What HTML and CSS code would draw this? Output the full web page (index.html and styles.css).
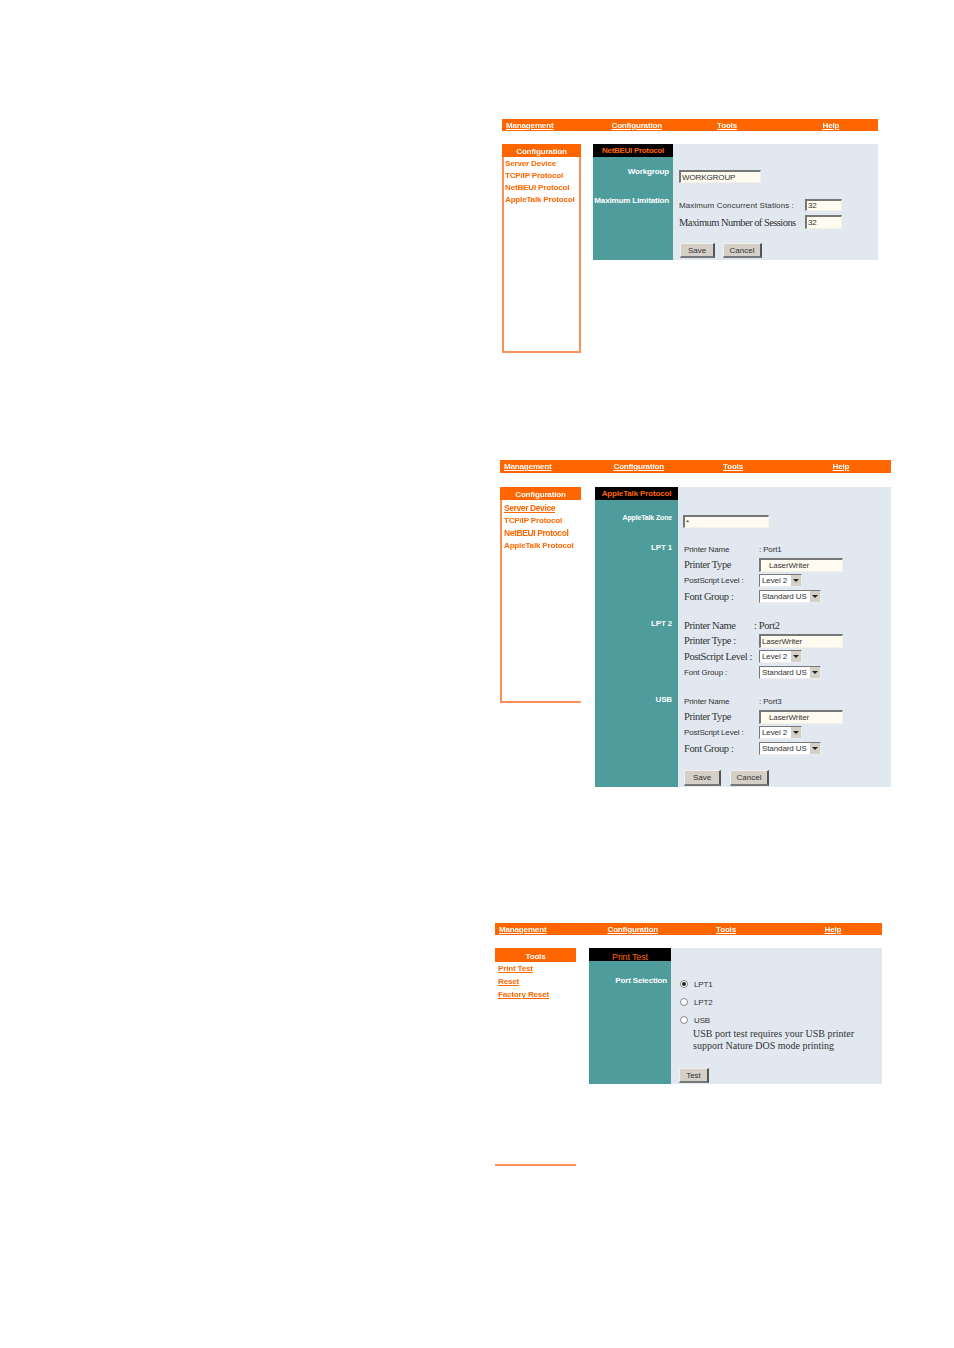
FILE: index.html
```html
<!DOCTYPE html>
<html lang="en">
<head>
  <meta charset="UTF-8">
  <title>Print Server Manual Page</title>
  <link rel="stylesheet" href="styles.css">
</head>
<body>
  <!-- NetBEUI screen -->
  <section class="shot shot-a">
    <nav class="topbar">
      <a>Management</a><a>Configuration</a><a>Tools</a><a>Help</a>
    </nav>
    <div class="shot-body">
      <aside class="side">
        <div class="side-title">Configuration</div>
        <a class="side-link">Server Device</a>
        <a class="side-link">TCP/IP Protocol</a>
        <a class="side-link">NetBEUI Protocol</a>
        <a class="side-link">AppleTalk Protocol</a>
      </aside>
      <div class="panel">
        <div class="panel-title">NetBEUI Protocol</div>
        <div class="panel-fill"></div>
        <div class="row a-workgroup">
          <div class="row-label">Workgroup</div>
          <div class="row-body"><input class="field field-name" value="WORKGROUP" readonly></div>
        </div>
        <div class="row a-limit">
          <div class="row-label">Maximum Limitation</div>
          <div class="row-body">
            <div class="limit-line small-line"><span class="limit-text">Maximum Concurrent Stations :</span><input class="field field-num" value="32" readonly></div>
            <div class="limit-line big-line"><span class="limit-text">Maximum Number of Sessions</span><input class="field field-num tall" value="32" readonly></div>
          </div>
        </div>
        <div class="row a-buttons">
          <div class="row-label"></div>
          <div class="row-body buttons"><button class="btn btn-save">Save</button><button class="btn btn-cancel">Cancel</button></div>
        </div>
      </div>
    </div>
  </section>

  <!-- AppleTalk screen -->
  <section class="shot shot-b">
    <nav class="topbar">
      <a>Management</a><a>Configuration</a><a>Tools</a><a>Help</a>
    </nav>
    <div class="shot-body">
      <aside class="side side-open">
        <div class="side-title">Configuration</div>
        <a class="side-link underlined big-link">Server Device</a>
        <a class="side-link">TCP/IP Protocol</a>
        <a class="side-link big-link">NetBEUI Protocol</a>
        <a class="side-link">AppleTalk Protocol</a>
      </aside>
      <div class="panel">
        <div class="panel-title">AppleTalk Protocol</div>
        <div class="panel-fill"></div>
        <div class="row b-zone">
          <div class="row-label label-small">AppleTalk Zone</div>
          <div class="row-body"><input class="field field-zone" value="*" readonly></div>
        </div>
        <div class="row b-port">
          <div class="row-label">LPT 1</div>
          <div class="row-body port">
            <div class="port-line line-name small-line"><span class="port-key">Printer Name</span><span class="port-value">: Port1</span></div>
            <div class="port-line line-input big-line"><span class="port-key">Printer Type</span><input class="field field-type field-inset" value="LaserWriter" readonly></div>
            <div class="port-line line-select small-line"><span class="port-key">PostScript Level :</span><div class="select select-level">Level 2<i class="arrow"></i></div></div>
            <div class="port-line line-select big-line"><span class="port-key">Font Group :</span><div class="select select-font">Standard US<i class="arrow"></i></div></div>
          </div>
        </div>
        <div class="row b-port">
          <div class="row-label">LPT 2</div>
          <div class="row-body port">
            <div class="port-line line-name big-line"><span class="port-key">Printer Name</span><span class="port-value">: Port2</span></div>
            <div class="port-line line-input big-line"><span class="port-key">Printer Type :</span><input class="field field-type" value="LaserWriter" readonly></div>
            <div class="port-line line-select big-line"><span class="port-key">PostScript Level :</span><div class="select select-level">Level 2<i class="arrow"></i></div></div>
            <div class="port-line line-select small-line"><span class="port-key">Font Group :</span><div class="select select-font">Standard US<i class="arrow"></i></div></div>
          </div>
        </div>
        <div class="row b-port">
          <div class="row-label">USB</div>
          <div class="row-body port">
            <div class="port-line line-name small-line"><span class="port-key">Printer Name</span><span class="port-value">: Port3</span></div>
            <div class="port-line line-input big-line"><span class="port-key">Printer Type</span><input class="field field-type field-inset" value="LaserWriter" readonly></div>
            <div class="port-line line-select small-line"><span class="port-key">PostScript Level :</span><div class="select select-level">Level 2<i class="arrow"></i></div></div>
            <div class="port-line line-select big-line"><span class="port-key">Font Group :</span><div class="select select-font">Standard US<i class="arrow"></i></div></div>
          </div>
        </div>
        <div class="row b-buttons">
          <div class="row-label"></div>
          <div class="row-body buttons"><button class="btn btn-save">Save</button><button class="btn btn-cancel">Cancel</button></div>
        </div>
      </div>
    </div>
  </section>

  <!-- Print test screen -->
  <section class="shot shot-c">
    <nav class="topbar">
      <a>Management</a><a>Configuration</a><a>Tools</a><a>Help</a>
    </nav>
    <div class="shot-body">
      <aside class="side side-bare">
        <div class="side-title">Tools</div>
        <a class="side-link underlined">Print Test</a>
        <a class="side-link underlined">Reset</a>
        <a class="side-link underlined">Factory Reset</a>
      </aside>
      <div class="panel">
        <div class="panel-title">Print Test</div>
        <div class="panel-fill"></div>
        <div class="row c-ports">
          <div class="row-label">Port Selection</div>
          <div class="row-body">
            <label class="radio-line"><i class="radio on"></i>LPT1</label>
            <label class="radio-line"><i class="radio"></i>LPT2</label>
            <label class="radio-line"><i class="radio"></i>USB</label>
            <p class="note">USB port test requires your USB printer<br>support Nature DOS mode printing</p>
          </div>
        </div>
        <div class="row c-buttons">
          <div class="row-label"></div>
          <div class="row-body buttons"><button class="btn btn-test">Test</button></div>
        </div>
      </div>
    </div>
  </section>
</body>
</html>
```

FILE: styles.css
```css
body {
  margin: 0;
  min-height: 1348px;
  background: #ffffff;
  font-family: "Liberation Sans", Arial, sans-serif;
  font-size: 8px;
  letter-spacing: -0.15px;
  color: #333333;
}

.shot {
  filter: blur(0.4px);
}

.shot-a {
  width: 376px;
  margin: 119px 0 0 502px;
}

.shot-b {
  width: 391px;
  margin: 107px 0 0 500px;
}

.shot-c {
  width: 387px;
  margin: 136px 0 0 495px;
}

/* top menu */
.topbar {
  display: grid;
  height: 12px;
  padding-left: 4px;
  background: #ff6600;
  align-items: center;
}

.shot-a .topbar { grid-template-columns: repeat(3, 105.5px) 1fr; }
.shot-b .topbar { grid-template-columns: repeat(3, 109.5px) 1fr; height: 13px; }
.shot-c .topbar { grid-template-columns: repeat(3, 108.5px) 1fr; }

.topbar a {
  color: #ffffff;
  font-weight: bold;
  text-decoration: underline;
}

.shot-body {
  display: grid;
  margin-top: 13px;
  align-items: start;
}

.shot-a .shot-body { grid-template-columns: 79px 1fr; column-gap: 12px; }
.shot-b .shot-body { grid-template-columns: 81px 1fr; column-gap: 14px; margin-top: 14px; }
.shot-c .shot-body { grid-template-columns: 81px 1fr; column-gap: 13px; }

/* side menu */
.side {
  box-sizing: border-box;
  height: 209px;
  border: 2px solid #ff9055;
  border-top: 0;
}

.side-open {
  height: 216px;
  border-width: 0 0 2px 2px;
}

.side-bare {
  height: 218px;
  border-width: 0 0 2px 0;
}

.side-title {
  height: 13px;
  margin: 0 -2px 1px;
  background: #ff6600;
  color: #ffffff;
  font-weight: bold;
  line-height: 15px;
  text-align: center;
}

.side-open .side-title { margin: 0 0 2px -2px; line-height: 15px; }
.side-bare .side-title { height: 14px; line-height: 18px; margin: 0 0 1px; }

.side-link {
  display: block;
  height: 12px;
  padding-left: 1px;
  color: #ff6600;
  font-weight: bold;
  line-height: 12px;
  white-space: nowrap;
}

.side-open .side-link { height: 12.5px; padding-left: 2px; }

.side-bare .side-link {
  padding-left: 3px;
  height: 13px;
}

.big-link { font-size: 8.5px; letter-spacing: -0.4px; }
.underlined { text-decoration: underline; }

/* main panel */
.panel {
  position: relative;
  display: grid;
  align-content: start;
  background: #e1e8f0;
}

.panel-title {
  width: var(--label-w);
  background: #000000;
  color: #ff6600;
  font-weight: bold;
  text-align: center;
  height: 13px;
  line-height: 14px;
  white-space: nowrap;
}

.shot-a .panel { --label-w: 80px; height: 116px; }
.shot-b .panel { --label-w: 83px; height: 300px; }
.shot-c .panel { --label-w: 82px; height: 136px; }
.shot-a .panel-title { letter-spacing: -0.3px; }
.shot-c .panel-title { height: 14px; line-height: 18px; font-size: 9px; font-weight: normal; }

/* teal strip below the title runs to the panel bottom */
.panel-fill {
  position: absolute;
  top: 13px;
  bottom: 0;
  left: 0;
  width: var(--label-w);
  background: #4f9c9c;
}

.row {
  position: relative;
  display: grid;
  grid-template-columns: var(--label-w) 1fr;
}

.row-label {
  box-sizing: border-box;
  padding-right: 4px;
  color: #ffffff;
  font-weight: bold;
  text-align: right;
  white-space: nowrap;
}

.label-small { font-size: 7px; }

.row-body {
  padding-left: 6px;
}

.a-workgroup { box-sizing: border-box; height: 42px; padding-top: 13px; }
.a-workgroup .row-label { margin-top: -3px; }
.a-limit { height: 44px; }
.a-limit .row-label { margin-top: -3px; }
.a-buttons { height: 17px; }
.a-buttons .row-body { padding-left: 7px; }

.b-zone { box-sizing: border-box; height: 47px; padding-top: 15px; }
.b-zone .row-label { padding-right: 6px; margin-top: -1px; }
.b-port { height: 76px; }
.b-port .row-label { padding-right: 6px; margin-top: -4px; }
.b-zone .row-body { padding-left: 5px; }
.b-buttons { height: 17px; margin-top: -5px; }

.c-ports { box-sizing: border-box; height: 106px; padding-top: 13px; }
.c-ports .row-label { padding-top: 1px; }
.c-buttons { height: 15px; }
.c-buttons .row-body { padding-left: 8px; }

/* form bits */
.field {
  box-sizing: border-box;
  display: block;
  margin: 0;
  padding: 0 0 0 1px;
  border: 1px solid;
  border-color: #777777 #f4f1e6 #f4f1e6 #777777;
  border-width: 2px 1px 1px 2px;
  background: #fffbf0;
  color: #333333;
  font-family: "Liberation Sans", Arial, sans-serif;
  font-size: 8px;
  letter-spacing: -0.1px;
  outline: none;
}

.field-name { width: 82px; height: 13px; }
.field-zone { width: 86px; height: 13px; }
.field-type { width: 84px; height: 14px; }
.field-inset { padding-left: 8px; }
.field-num { width: 37px; height: 12px; }
.field-num.tall { height: 14px; }

.limit-line {
  display: flex;
  align-items: center;
  justify-content: space-between;
  width: 163px;
  white-space: nowrap;
}

.small-line { font-size: 8px; }

.big-line {
  font-family: "Liberation Serif", "Times New Roman", serif;
  font-size: 10.5px;
  letter-spacing: -0.4px;
}

.a-limit .small-line { height: 12px; margin-bottom: 4px; letter-spacing: 0.1px; }
.a-limit .big-line { height: 14px; letter-spacing: -0.55px; }

.buttons {
  display: flex;
  align-items: flex-start;
}

.btn {
  box-sizing: border-box;
  height: 15px;
  margin: 0;
  padding: 0;
  border: 1px solid;
  border-color: #f2f0ea #555555 #777777 #f2f0ea;
  border-width: 1px 2px 2px 1px;
  background: #d4d0c8;
  color: #333333;
  font-family: inherit;
  font-size: 8px;
}

.shot-a .btn-save { width: 35px; margin-right: 8px; }
.shot-a .btn-cancel { width: 39px; }
.shot-b .btn { height: 16px; }
.shot-b .btn-save { width: 37px; margin-right: 9px; }
.shot-b .btn-cancel { width: 39px; }
.btn-test { width: 30px; }

.port-line {
  display: flex;
  align-items: center;
  height: 16px;
}

.line-name {
  height: 11px;
  margin: -3px 0 2px;
}

.line-input { height: 15px; }

.port-key { width: 75px; white-space: nowrap; }

.port-value { white-space: nowrap; }
.big-line .port-value { margin-left: -5px; }

.select {
  box-sizing: border-box;
  display: flex;
  align-items: center;
  justify-content: space-between;
  height: 13px;
  padding-left: 2px;
  border: 1px solid;
  border-color: #777777 #eeeeee #eeeeee #777777;
  background: #ffffff;
  font-family: "Liberation Sans", Arial, sans-serif;
  font-size: 8px;
  letter-spacing: -0.1px;
  white-space: nowrap;
}

.select-level { width: 43px; }
.select-font { width: 62px; }

.arrow {
  position: relative;
  flex: none;
  width: 10px;
  height: 11px;
  background: #d4d0c8;
}

.arrow::after {
  content: "";
  position: absolute;
  top: 4px;
  left: 2px;
  border: 3px solid transparent;
  border-top: 3px solid #222222;
  border-bottom: 0;
}

.radio-line {
  display: flex;
  align-items: center;
  gap: 6px;
  height: 18px;
  padding-left: 3px;
}

.radio {
  box-sizing: border-box;
  position: relative;
  width: 8px;
  height: 8px;
  border: 1px solid #888888;
  border-radius: 50%;
  background: #ffffff;
}

.radio.on::after {
  content: "";
  position: absolute;
  inset: 1px;
  border-radius: 50%;
  background: #222222;
}

.note {
  margin: -1px 0 0 16px;
  font-family: "Liberation Serif", "Times New Roman", serif;
  font-size: 10px;
  letter-spacing: 0;
  line-height: 12px;
  white-space: nowrap;
}
```
